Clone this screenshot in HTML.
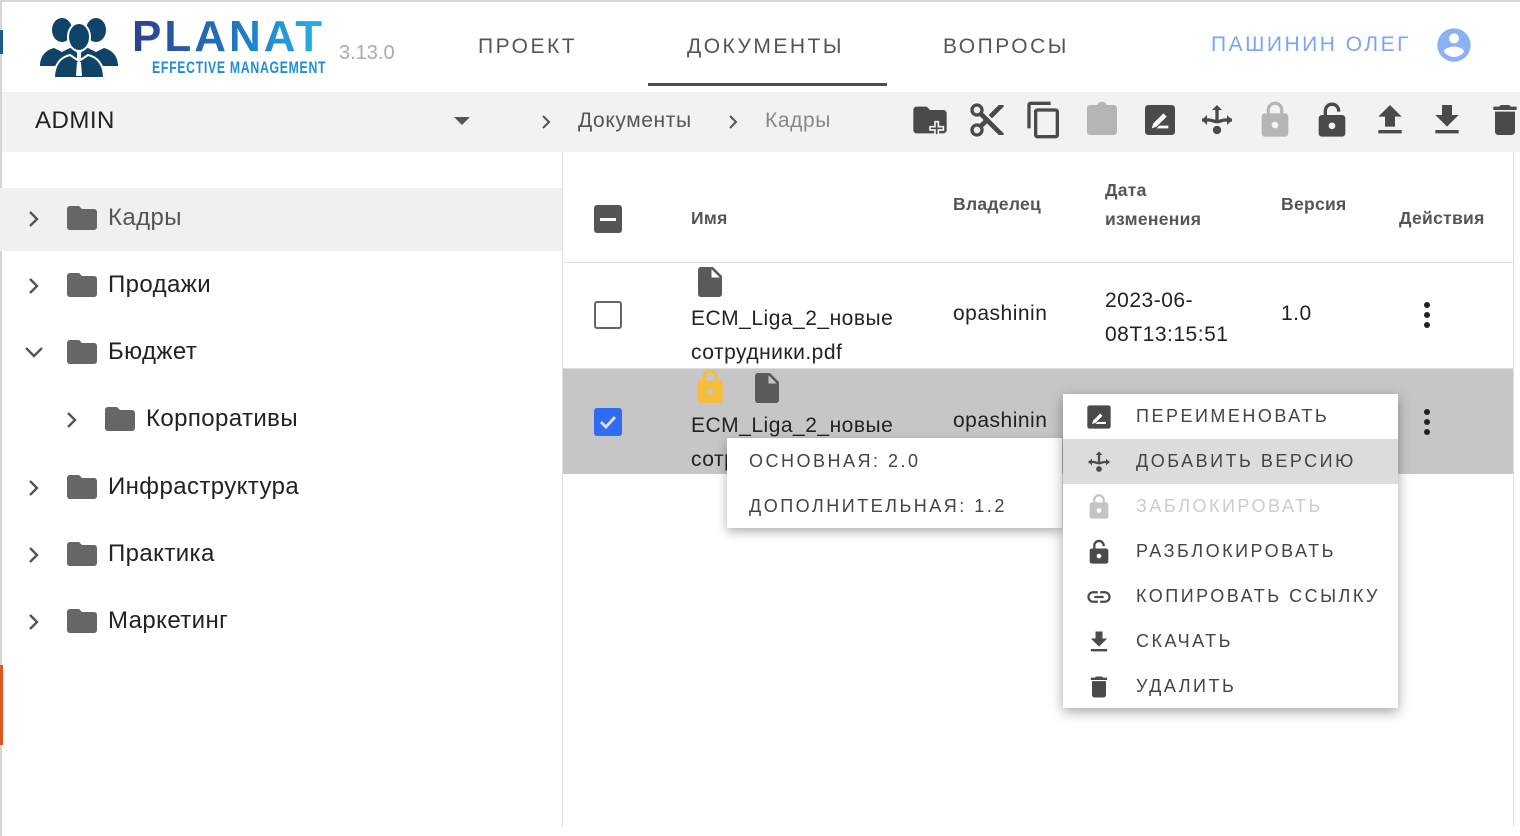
<!DOCTYPE html>
<html><head><meta charset="utf-8"><style>
*{margin:0;padding:0;box-sizing:border-box}
body{width:1520px;height:836px;overflow:hidden;background:#fff;font-family:"Liberation Sans","DejaVu Sans",sans-serif;position:relative;color:#222}
.a{position:absolute}
svg.i{position:absolute}
.nav{position:absolute;top:35px;font-size:21px;letter-spacing:2.5px;color:#555}
.th{position:absolute;font-size:17.5px;font-weight:bold;color:#555;letter-spacing:.3px}
.cell{position:absolute;font-size:21px;color:#222;letter-spacing:.5px}
.tl{position:absolute;font-size:24px;letter-spacing:.4px;color:#222}
.mi{position:absolute;left:0;width:335px;height:45px;font-size:18px;letter-spacing:2.5px;color:#444}
.mi span{position:absolute;left:73px;top:12px}
.mi svg{position:absolute;left:22px;top:9px}
</style></head><body>
<div class="a" style="left:0;top:0;width:1520px;height:2px;background:#d5d5d5"></div>
<div class="a" style="left:0;top:0;width:2px;height:836px;background:#d5d5d5"></div>
<div class="a" style="left:0;top:30px;width:3px;height:24px;background:#1e5b8c"></div>
<div class="a" style="left:0;top:665px;width:3px;height:80px;background:#d9581c"></div>

<svg class="i" style="left:38px;top:18px" width="82" height="60" viewBox="0 0 82 60" fill="#0d4468">
<ellipse cx="24" cy="12" rx="10" ry="12"/><ellipse cx="58" cy="12" rx="10" ry="12"/>
<path d="M2 48c0-10 6-16 14-18l8 4 8-4c4 1 6 3 7 5v13z"/><path d="M43 48V35c1-2 3-4 7-5l8 4 8-4c8 2 14 8 14 18z"/>
<ellipse cx="41" cy="19" rx="11" ry="14" stroke="#fff" stroke-width="2"/>
<path d="M16 60c0-14 7-21 16-23l9 6 9-6c9 2 16 9 16 23z" stroke="#fff" stroke-width="2"/>
<path d="M39 44h4l1 14h-6z" fill="#fff"/>
</svg>
<div class="a" style="left:132px;top:13px;font-size:44px;font-weight:900;letter-spacing:3px;background:linear-gradient(90deg,#2e3f8e,#1f7fc6 60%,#27b5ea);-webkit-background-clip:text;color:transparent;line-height:48px">PLANAT</div>
<div class="a" style="left:152px;top:58px;font-size:17px;font-weight:bold;color:#1f8ed6;letter-spacing:1px;transform:scaleX(.72);transform-origin:left;line-height:20px;white-space:nowrap">EFFECTIVE&nbsp;MANAGEMENT</div>
<div class="a" style="left:339px;top:42px;font-size:20px;color:#aaa">3.13.0</div>

<div class="nav" style="left:478px">ПРОЕКТ</div>
<div class="nav" style="left:687px">ДОКУМЕНТЫ</div>
<div class="nav" style="left:943px">ВОПРОСЫ</div>
<div class="a" style="left:648px;top:83px;width:239px;height:3px;background:#4a4f5c"></div>
<div class="a" style="left:1211px;top:33px;font-size:21px;letter-spacing:2.5px;color:#7aa7f5">ПАШИНИН ОЛЕГ</div>
<svg class="i" style="left:1434px;top:25px" width="40" height="40" viewBox="0 0 24 24" fill="#8ab0f5"><path d="M12 2C6.48 2 2 6.48 2 12s4.48 10 10 10 10-4.48 10-10S17.52 2 12 2zm0 3c1.66 0 3 1.34 3 3s-1.34 3-3 3-3-1.34-3-3 1.34-3 3-3zm0 14.2c-2.5 0-4.71-1.28-6-3.22.03-1.99 4-3.08 6-3.08 1.99 0 5.97 1.09 6 3.08-1.29 1.94-3.5 3.22-6 3.22z"/></svg>

<div class="a" style="left:2px;top:92px;width:1518px;height:60px;background:#f2f2f2"></div>
<div class="a" style="left:35px;top:107px;font-size:24px;color:#222;letter-spacing:.5px">ADMIN</div>
<svg class="i" style="left:454px;top:117px" width="16" height="10"><path d="M0 0h16L8 8z" fill="#555"/></svg>
<svg class="i" style="left:540px;top:114px" width="12" height="16"><path d="M3 2l6 6-6 6" fill="none" stroke="#555" stroke-width="2"/></svg>
<div class="a" style="left:578px;top:109px;font-size:21px;color:#555;letter-spacing:.6px">Документы</div>
<svg class="i" style="left:727px;top:114px" width="12" height="16"><path d="M3 2l6 6-6 6" fill="none" stroke="#555" stroke-width="2"/></svg>
<div class="a" style="left:765px;top:109px;font-size:21px;color:#888;letter-spacing:.6px">Кадры</div>
<svg class="i" style="left:910px;top:100px" width="40" height="40" viewBox="0 0 24 24" fill="#4a4a4a"><path d="M20 6h-8l-2-2H4c-1.11 0-1.99.89-1.99 2L2 18c0 1.11.89 2 2 2h16c1.11 0 2-.89 2-2V8c0-1.11-.89-2-2-2z"/><path d="M17 13v3h3v2h-3v3h-2v-3h-3v-2h3v-3z" stroke="#f2f2f2" stroke-width="1"/></svg>
<svg class="i" style="left:967px;top:100px" width="40" height="40" viewBox="0 0 24 24" fill="#4a4a4a"><path d="M9.64 7.64c.23-.5.36-1.05.36-1.64 0-2.21-1.790-4-4-4S2 3.79 2 6s1.79 4 4 4c.59 0 1.14-.13 1.64-.36L10 12l-2.36 2.36C7.14 14.13 6.59 14 6 14c-2.21 0-4 1.79-4 4s1.79 4 4 4 4-1.79 4-4c0-.59-.13-1.14-.36-1.64L12 14l7 7h3v-1L9.64 7.64zM6 8c-1.1 0-2-.89-2-2s.9-2 2-2 2 .89 2 2-.9 2-2 2zm0 12c-1.1 0-2-.89-2-2s.9-2 2-2 2 .89 2 2-.9 2-2 2zM19 3l-6 6 2 2 7-7V3z"/></svg>
<svg class="i" style="left:1024px;top:100px" width="40" height="40" viewBox="0 0 24 24" fill="#4a4a4a"><path d="M16 1H4c-1.1 0-2 .9-2 2v14h2V3h12V1zm3 4H8c-1.1 0-2 .9-2 2v14c0 1.1.9 2 2 2h11c1.1 0 2-.9 2-2V7c0-1.1-.9-2-2-2zm0 16H8V7h11v14z"/></svg>
<svg class="i" style="left:1082px;top:100px" width="40" height="40" viewBox="0 0 24 24" fill="#b5b5b5"><path d="M19 3h-4.18C14.4 1.84 13.3 1 12 1c-1.3 0-2.4.84-2.82 2H5c-1.1 0-2 .9-2 2v14c0 1.1.9 2 2 2h14c1.1 0 2-.9 2-2V5c0-1.1-.9-2-2-2z"/></svg>
<svg class="i" style="left:1140px;top:100px" width="40" height="40" viewBox="0 0 24 24"><rect x="3" y="3" width="18" height="18" rx="2" fill="#4a4a4a"/><path d="M7 17l1-3 6-6 2 2-6 6zM10 17h7v-1.6h-5.4z" fill="#fff"/></svg>
<svg class="i" style="left:1197px;top:100px" width="40" height="40" viewBox="0 0 24 24" fill="none" stroke="#4a4a4a" stroke-width="2"><path d="M12 4v9M3 12h4M17 12h4M12 13c-2 0-3-1-5-1M12 13c2 0 3-1 5-1"/><path d="M9 6l3-3 3 3z M3 12l3-3v6z M21 12l-3-3v6z" fill="#4a4a4a" stroke="none"/><circle cx="12" cy="18" r="2.5" fill="#4a4a4a" stroke="none"/></svg>
<svg class="i" style="left:1255px;top:100px" width="40" height="40" viewBox="0 0 24 24" fill="#b5b5b5"><path d="M18 8h-1V6c0-2.76-2.24-5-5-5S7 3.24 7 6v2H6c-1.1 0-2 .9-2 2v10c0 1.1.9 2 2 2h12c1.1 0 2-.9 2-2V10c0-1.1-.9-2-2-2zm-6 9c-1.1 0-2-.9-2-2s.9-2 2-2 2 .9 2 2-.9 2-2 2zm3.1-9H8.9V6c0-1.71 1.39-3.1 3.1-3.1 1.71 0 3.1 1.39 3.1 3.1v2z"/></svg>
<svg class="i" style="left:1312px;top:100px" width="40" height="40" viewBox="0 0 24 24" fill="#4a4a4a"><path d="M18 9H6c-1.1 0-2 .9-2 2v9c0 1.1.9 2 2 2h12c1.1 0 2-.9 2-2v-9c0-1.1-.9-2-2-2zm-6 8.5c-1.1 0-2-.9-2-2s.9-2 2-2 2 .9 2 2-.9 2-2 2z"/><path d="M8 9V6.5C8 4.3 9.8 2.5 12 2.5s4 1.8 4 4V7" fill="none" stroke="#4a4a4a" stroke-width="2"/></svg>
<svg class="i" style="left:1370px;top:100px" width="40" height="40" viewBox="0 0 24 24" fill="#4a4a4a"><path d="M9 16h6v-6h4l-7-7-7 7h4zm-4 2h14v2H5z"/></svg>
<svg class="i" style="left:1427px;top:100px" width="40" height="40" viewBox="0 0 24 24" fill="#4a4a4a"><path d="M19 9h-4V3H9v6H5l7 7 7-7zM5 18v2h14v-2H5z"/></svg>
<svg class="i" style="left:1485px;top:100px" width="40" height="40" viewBox="0 0 24 24" fill="#4a4a4a"><path d="M6 19c0 1.1.9 2 2 2h8c1.1 0 2-.9 2-2V7H6v12zM19 4h-3.5l-1-1h-5l-1 1H5v2h14V4z"/></svg>

<div class="a" style="left:562px;top:152px;width:1px;height:675px;background:#e0e0e0"></div>
<div class="a" style="left:1513px;top:152px;width:1px;height:675px;background:#e0e0e0"></div>
<div class="a" style="left:0;top:188px;width:562px;height:63px;background:#f0f0f0"></div>
<svg style="display:none"><symbol id="fold" viewBox="0 0 24 24"><path d="M10 4H4c-1.1 0-2 .9-2 2v12c0 1.1.9 2 2 2h16c1.1 0 2-.9 2-2V8c0-1.1-.9-2-2-2h-8l-2-2z" fill="#666"/></symbol>
<symbol id="chev" viewBox="0 0 14 20"><path d="M3 3l7 7-7 7" fill="none" stroke="#555" stroke-width="2.4"/></symbol>
<symbol id="file" viewBox="0 0 24 24"><path d="M14 2H6c-1.1 0-1.99.9-1.99 2L4 20c0 1.1.89 2 1.99 2H18c1.1 0 2-.9 2-2V8l-6-6zm-1 7V3.5L18.5 9H13z" fill="#5a5a5a"/></symbol></svg>

<svg class="i" style="left:27px;top:209px" width="14" height="20"><use href="#chev"/></svg>
<svg class="i" style="left:64px;top:200px" width="36" height="36"><use href="#fold"/></svg>
<div class="tl" style="left:108px;top:204px;color:#555">Кадры</div>

<svg class="i" style="left:27px;top:276px" width="14" height="20"><use href="#chev"/></svg>
<svg class="i" style="left:64px;top:267px" width="36" height="36"><use href="#fold"/></svg>
<div class="tl" style="left:108px;top:271px">Продажи</div>

<svg class="i" style="left:24px;top:346px" width="20" height="14"><path d="M2 2l8 8 8-8" fill="none" stroke="#555" stroke-width="2.4"/></svg>
<svg class="i" style="left:64px;top:334px" width="36" height="36"><use href="#fold"/></svg>
<div class="tl" style="left:108px;top:338px">Бюджет</div>

<svg class="i" style="left:65px;top:410px" width="14" height="20"><use href="#chev"/></svg>
<svg class="i" style="left:102px;top:401px" width="36" height="36"><use href="#fold"/></svg>
<div class="tl" style="left:146px;top:405px">Корпоративы</div>

<svg class="i" style="left:27px;top:478px" width="14" height="20"><use href="#chev"/></svg>
<svg class="i" style="left:64px;top:469px" width="36" height="36"><use href="#fold"/></svg>
<div class="tl" style="left:108px;top:473px">Инфраструктура</div>

<svg class="i" style="left:27px;top:545px" width="14" height="20"><use href="#chev"/></svg>
<svg class="i" style="left:64px;top:536px" width="36" height="36"><use href="#fold"/></svg>
<div class="tl" style="left:108px;top:540px">Практика</div>

<svg class="i" style="left:27px;top:612px" width="14" height="20"><use href="#chev"/></svg>
<svg class="i" style="left:64px;top:603px" width="36" height="36"><use href="#fold"/></svg>
<div class="tl" style="left:108px;top:607px">Маркетинг</div>

<div class="a" style="left:594px;top:205px;width:28px;height:28px;background:#555;border-radius:3px"></div>
<div class="a" style="left:600px;top:218px;width:16px;height:3px;background:#fff"></div>
<div class="th" style="left:691px;top:208px">Имя</div>
<div class="th" style="left:953px;top:194px">Владелец</div>
<div class="th" style="left:1105px;top:176px;line-height:29px">Дата<br>изменения</div>
<div class="th" style="left:1281px;top:194px">Версия</div>
<div class="th" style="left:1399px;top:208px">Действия</div>
<div class="a" style="left:563px;top:262px;width:950px;height:1px;background:#ddd"></div>

<div class="a" style="left:594px;top:301px;width:28px;height:28px;border:2.5px solid #666;border-radius:3px"></div>
<svg class="i" style="left:692px;top:264px" width="36" height="36"><use href="#file"/></svg>
<div class="cell" style="left:691px;top:302px;line-height:34px">ECM_Liga_2_новые<br>сотрудники.pdf</div>
<div class="cell" style="left:953px;top:302px">opashinin</div>
<div class="cell" style="left:1105px;top:284px;line-height:34px">2023-06-<br>08T13:15:51</div>
<div class="cell" style="left:1281px;top:302px">1.0</div>
<svg class="i" style="left:1415px;top:299px" width="24" height="32" viewBox="0 0 24 32" fill="#222"><circle cx="12" cy="6" r="3"/><circle cx="12" cy="16" r="3"/><circle cx="12" cy="26" r="3"/></svg>
<div class="a" style="left:563px;top:368px;width:950px;height:1px;background:#ddd"></div>

<div class="a" style="left:563px;top:369px;width:950px;height:105px;background:#c6c6c6"></div>
<div class="a" style="left:594px;top:408px;width:28px;height:28px;background:#2f6bf5;border-radius:3px"></div>
<svg class="i" style="left:597px;top:411px" width="22" height="22"><path d="M4 11l5 5 9-10" fill="none" stroke="#ddd" stroke-width="3"/></svg>
<svg class="i" style="left:691px;top:368px" width="38" height="38" viewBox="0 0 24 24" fill="#f5bd3a"><path d="M18 8h-1V6c0-2.76-2.24-5-5-5S7 3.24 7 6v2H6c-1.1 0-2 .9-2 2v10c0 1.1.9 2 2 2h12c1.1 0 2-.9 2-2V10c0-1.1-.9-2-2-2zm-6 9c-1.1 0-2-.9-2-2s.9-2 2-2 2 .9 2 2-.9 2-2 2zm3.1-9H8.9V6c0-1.71 1.39-3.1 3.1-3.1 1.71 0 3.1 1.39 3.1 3.1v2z"/></svg>
<svg class="i" style="left:749px;top:370px" width="36" height="36"><use href="#file"/></svg>
<div class="cell" style="left:691px;top:409px;line-height:34px">ECM_Liga_2_новые<br>сотрудники.pdf</div>
<div class="cell" style="left:953px;top:409px">opashinin</div>
<svg class="i" style="left:1415px;top:406px" width="24" height="32" viewBox="0 0 24 32" fill="#222"><circle cx="12" cy="6" r="3"/><circle cx="12" cy="16" r="3"/><circle cx="12" cy="26" r="3"/></svg>

<div class="a" style="left:727px;top:438px;width:335px;height:90px;background:#fff;box-shadow:0 4px 10px rgba(0,0,0,.3)">
<div class="a" style="left:22px;top:13px;font-size:18px;letter-spacing:2.5px;color:#444">ОСНОВНАЯ: 2.0</div>
<div class="a" style="left:22px;top:58px;font-size:18px;letter-spacing:2.5px;color:#444">ДОПОЛНИТЕЛЬНАЯ: 1.2</div>
</div>

<div class="a" style="left:1063px;top:394px;width:335px;height:314px;background:#fff;box-shadow:0 4px 12px rgba(0,0,0,.35)">
<div class="mi" style="top:0"><svg width="28" height="28" viewBox="0 0 24 24"><rect x="2" y="2" width="20" height="20" rx="2" fill="#4a4a4a"/><path d="M6 18l1-3 6-6 2 2-6 6zM9 18h9v-1.8h-7.2z" fill="#fff"/></svg><span>ПЕРЕИМЕНОВАТЬ</span></div>
<div class="mi" style="top:45px;background:#dcdcdc"><svg width="28" height="28" viewBox="0 0 24 24" fill="none" stroke="#4a4a4a" stroke-width="2"><path d="M12 4v9M3 12h4M17 12h4M12 13c-2 0-3-1-5-1M12 13c2 0 3-1 5-1"/><path d="M9 6l3-3 3 3z M3 12l3-3v6z M21 12l-3-3v6z" fill="#4a4a4a" stroke="none"/><circle cx="12" cy="18" r="2.5" fill="#4a4a4a" stroke="none"/></svg><span>ДОБАВИТЬ ВЕРСИЮ</span></div>
<div class="mi" style="top:90px;color:#ccc"><svg width="28" height="28" viewBox="0 0 24 24" fill="#c4c4c4"><path d="M18 8h-1V6c0-2.76-2.24-5-5-5S7 3.24 7 6v2H6c-1.1 0-2 .9-2 2v10c0 1.1.9 2 2 2h12c1.1 0 2-.9 2-2V10c0-1.1-.9-2-2-2zm-6 9c-1.1 0-2-.9-2-2s.9-2 2-2 2 .9 2 2-.9 2-2 2zm3.1-9H8.9V6c0-1.71 1.39-3.1 3.1-3.1 1.71 0 3.1 1.39 3.1 3.1v2z"/></svg><span>ЗАБЛОКИРОВАТЬ</span></div>
<div class="mi" style="top:135px"><svg width="28" height="28" viewBox="0 0 24 24" fill="#4a4a4a"><path d="M18 9H6c-1.1 0-2 .9-2 2v9c0 1.1.9 2 2 2h12c1.1 0 2-.9 2-2v-9c0-1.1-.9-2-2-2zm-6 8.5c-1.1 0-2-.9-2-2s.9-2 2-2 2 .9 2 2-.9 2-2 2z"/><path d="M8 9V6.5C8 4.3 9.8 2.5 12 2.5s4 1.8 4 4V7" fill="none" stroke="#4a4a4a" stroke-width="2"/></svg><span>РАЗБЛОКИРОВАТЬ</span></div>
<div class="mi" style="top:180px"><svg width="28" height="28" viewBox="0 0 24 24" fill="#4a4a4a"><path d="M3.9 12c0-1.71 1.39-3.1 3.1-3.1h4V7H7c-2.76 0-5 2.24-5 5s2.24 5 5 5h4v-1.9H7c-1.71 0-3.1-1.39-3.1-3.1zM8 13h8v-2H8v2zm9-6h-4v1.9h4c1.71 0 3.1 1.39 3.1 3.1s-1.39 3.1-3.1 3.1h-4V17h4c2.76 0 5-2.24 5-5s-2.24-5-5-5z"/></svg><span>КОПИРОВАТЬ ССЫЛКУ</span></div>
<div class="mi" style="top:225px"><svg width="28" height="28" viewBox="0 0 24 24" fill="#4a4a4a"><path d="M19 9h-4V3H9v6H5l7 7 7-7zM5 18v2h14v-2H5z"/></svg><span>СКАЧАТЬ</span></div>
<div class="mi" style="top:270px"><svg width="28" height="28" viewBox="0 0 24 24" fill="#4a4a4a"><path d="M6 19c0 1.1.9 2 2 2h8c1.1 0 2-.9 2-2V7H6v12zM19 4h-3.5l-1-1h-5l-1 1H5v2h14V4z"/></svg><span>УДАЛИТЬ</span></div>
</div>
</body></html>
